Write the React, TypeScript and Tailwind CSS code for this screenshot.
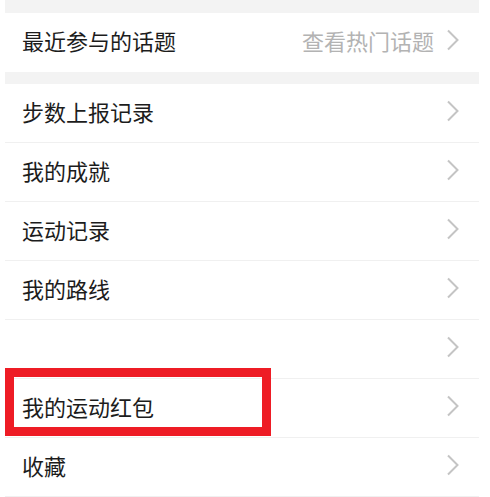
import React from 'react'

const font = { fontFamily: '"Noto Sans CJK SC", "Noto Sans", sans-serif' }

function Chevron() {
  return (
    <svg width="14" height="22" viewBox="0 0 14 22" className="shrink-0">
      <path d="M2 1.5 L11.5 11 L2 20.5" fill="none" stroke="#c4c4c4" strokeWidth="2" />
    </svg>
  )
}

function Row({ label, extra, last }: { label: string; extra?: string; last?: boolean }) {
  return (
    <div className={`flex h-[59px] items-center justify-between pb-[5px] pl-[17px] pr-[19px] ${last ? '' : 'border-b border-[#f0f0f0]'}`}>
      <span className="text-[22px] leading-none text-[#1c1c1c]">{label}</span>
      <div className="flex items-center gap-[12px]">
        {extra && <span className="text-[22px] leading-none text-[#b3b3b3]">{extra}</span>}
        <Chevron />
      </div>
    </div>
  )
}

export default function App() {
  return (
    <div className="h-[497px] w-[490px] overflow-hidden bg-white px-[5px]" style={font}>
      <div className="w-[474px]">
        <div className="h-[13px] bg-[#f3f3f3]" />
        <Row label="最近参与的话题" extra="查看热门话题" last />
        <div className="h-[12px] bg-[#f3f3f3]" />
        <Row label="步数上报记录" />
        <Row label="我的成就" />
        <Row label="运动记录" />
        <Row label="我的路线" />
        <Row label="" />
        <div className="relative">
          <Row label="我的运动红包" />
          {/* highlight annotation */}
          <div className="pointer-events-none absolute left-0 top-[-11px] h-[68px] w-[266px] border-[9px] border-[#ee1c25]" />
        </div>
        <Row label="收藏" />
      </div>
    </div>
  )
}
